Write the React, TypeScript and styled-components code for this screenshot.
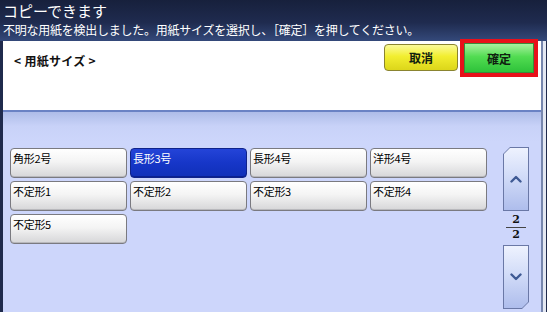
import React from 'react';
import styled, { createGlobalStyle } from 'styled-components';

const GlobalStyle = createGlobalStyle`
  html, body {
    margin: 0;
    padding: 0;
    background: #1f2a4c;
  }
  * {
    box-sizing: border-box;
  }
`;

const FONT = `"Noto Sans CJK JP", "Noto Sans", "DejaVu Sans", sans-serif`;

const sizes = [
  '角形2号',
  '長形3号',
  '長形4号',
  '洋形4号',
  '不定形1',
  '不定形2',
  '不定形3',
  '不定形4',
  '不定形5',
];

const SELECTED = '長形3号';

const Screen = styled.div`
  width: 547px;
  height: 312px;
  display: flex;
  flex-direction: column;
  background: #1f2a4c;
  font-family: ${FONT};
  overflow: hidden;
`;

const Header = styled.header`
  height: 41px;
  flex-shrink: 0;
  padding: 0 0 0 3px;
  display: flex;
  flex-direction: column;
  background: linear-gradient(to bottom, #17203c 0%, #1f2b4f 55%, #34497a 100%);
  color: #fff;
`;

const Title = styled.div`
  font-size: 15px;
  line-height: 20px;
  height: 20px;
  margin-top: 1px;
`;

const Message = styled.div`
  font-size: 12px;
  line-height: 18px;
  letter-spacing: -0.25px;
  white-space: nowrap;
`;

const Body = styled.div`
  flex: 1;
  display: flex;
  flex-direction: column;
  margin-left: 3px;
  margin-right: 4px;
  border-right: 2px solid #7686ad;
  box-shadow: 3px 0 0 #e4e8f2;
`;

const TopPanel = styled.div`
  height: 71px;
  flex-shrink: 0;
  background: #fff;
  border-bottom: 2px solid #6a82c4;
  display: flex;
  align-items: flex-start;
  justify-content: space-between;
  padding: 3px 0 0 11px;
`;

const PanelLabel = styled.div`
  font-size: 12px;
  font-weight: bold;
  color: #111;
  margin-top: 8px;
  letter-spacing: 0.3px;
`;

const Actions = styled.div`
  display: flex;
  align-items: flex-start;
  gap: 2px;
  margin-right: 3px;
`;

const ActionButton = styled.button<{ $tone: 'yellow' | 'green' }>`
  width: 74px;
  height: 27px;
  margin-top: 0;
  border: 1px solid ${(p) => (p.$tone === 'yellow' ? '#8a8430' : '#3a8a3a')};
  border-radius: 4px;
  font-family: ${FONT};
  font-size: 12px;
  font-weight: bold;
  color: #102010;
  background: ${(p) =>
    p.$tone === 'yellow'
      ? 'linear-gradient(to bottom, #fbfb9a 0%, #f2ee30 45%, #dcd61a 100%)'
      : 'linear-gradient(to bottom, #a8f0a0 0%, #52dc52 45%, #2ec23a 100%)'};
  padding: 0;
`;

const Highlight = styled.div`
  border: 4px solid #e8101a;
  padding: 0;
  margin-top: -5px;
  display: flex;

  ${ActionButton} {
    margin: 0;
    width: 70px;
    height: 30px;
    border-radius: 0;
  }
`;

const Lower = styled.div`
  flex: 1;
  display: flex;
  background: linear-gradient(to bottom, #aebce8 0px, #c8d2f8 14px, #cdd6fb 30px);
  padding: 35px 0 0 7px;
`;

const Grid = styled.div`
  display: grid;
  grid-template-columns: repeat(4, 117px);
  grid-auto-rows: 30px;
  gap: 3px 3px;
  align-content: start;
  margin-top: 1px;
`;

const SizeButton = styled.button<{ $selected?: boolean }>`
  border: 1px solid ${(p) => (p.$selected ? '#10238a' : '#7a7a80')};
  border-radius: 4px;
  background: ${(p) =>
    p.$selected
      ? 'linear-gradient(to bottom, #2444d8 0%, #1636c8 50%, #1030b8 100%)'
      : 'linear-gradient(to bottom, #ffffff 0%, #f4f4f4 45%, #d6d6d8 100%)'};
  box-shadow: inset 0 -1px 0 ${(p) => (p.$selected ? '#0a2090' : '#b8b8bc')};
  color: ${(p) => (p.$selected ? '#fff' : '#000')};
  font-family: ${FONT};
  font-size: 11px;
  line-height: 14px;
  text-align: left;
  padding: 2px 2px 0;
  display: flex;
  align-items: flex-start;
  letter-spacing: -0.3px;
`;

const Scroller = styled.div`
  margin-left: 16px;
  width: 26px;
  display: flex;
  flex-direction: column;
  align-items: center;
`;

const ScrollOuter = styled.div<{ $dir: 'up' | 'down' }>`
  width: 26px;
  height: 64px;
  padding: 1px;
  background: #6a78a6;
  clip-path: ${(p) =>
    p.$dir === 'up'
      ? 'polygon(7px 0, 100% 0, 100% 100%, 0 100%, 0 7px)'
      : 'polygon(0 0, 100% 0, 100% calc(100% - 7px), calc(100% - 7px) 100%, 0 100%)'};
`;

const ScrollInner = styled.button<{ $dir: 'up' | 'down' }>`
  width: 100%;
  height: 100%;
  border: none;
  padding: 0;
  display: flex;
  align-items: center;
  justify-content: center;
  background: linear-gradient(to bottom, #eef2fe 0%, #d2dcf8 45%, #aebdec 100%);
  clip-path: ${(p) =>
    p.$dir === 'up'
      ? 'polygon(6px 0, 100% 0, 100% 100%, 0 100%, 0 6px)'
      : 'polygon(0 0, 100% 0, 100% calc(100% - 6px), calc(100% - 6px) 100%, 0 100%)'};
`;

const PageCount = styled.div`
  display: flex;
  flex-direction: column;
  align-items: center;
  width: 26px;
  margin: 3px 0 4px;
  font-family: "DejaVu Serif", serif;
  font-size: 11px;
  line-height: 12px;
  font-weight: bold;
  color: #111;
`;

const Rule = styled.div`
  width: 20px;
  height: 1px;
  background: #444;
  margin: 1px 0 1px;
`;

const Chevron = ({ up }: { up?: boolean }) => (
  <svg width="12" height="8" viewBox="0 0 12 8">
    <path
      d={up ? 'M1.5 6.5 L6 2 L10.5 6.5' : 'M1.5 1.5 L6 6 L10.5 1.5'}
      fill="none"
      stroke="#3f5a94"
      strokeWidth="2.4"
      strokeLinecap="round"
      strokeLinejoin="round"
    />
  </svg>
);

export default function App() {
  return (
    <>
      <GlobalStyle />
      <Screen>
        <Header>
          <Title>コピーできます</Title>
          <Message>不明な用紙を検出しました。用紙サイズを選択し、［確定］を押してください。</Message>
        </Header>
        <Body>
          <TopPanel>
            <PanelLabel>&lt; 用紙サイズ &gt;</PanelLabel>
            <Actions>
              <ActionButton $tone="yellow">取消</ActionButton>
              <Highlight>
                <ActionButton $tone="green">確定</ActionButton>
              </Highlight>
            </Actions>
          </TopPanel>
          <Lower>
            <Grid>
              {sizes.map((s) => (
                <SizeButton key={s} $selected={s === SELECTED}>
                  {s}
                </SizeButton>
              ))}
            </Grid>
            <Scroller>
              <ScrollOuter $dir="up">
                <ScrollInner $dir="up">
                  <Chevron up />
                </ScrollInner>
              </ScrollOuter>
              <PageCount>
                <span>2</span>
                <Rule />
                <span>2</span>
              </PageCount>
              <ScrollOuter $dir="down">
                <ScrollInner $dir="down">
                  <Chevron />
                </ScrollInner>
              </ScrollOuter>
            </Scroller>
          </Lower>
        </Body>
      </Screen>
    </>
  );
}
